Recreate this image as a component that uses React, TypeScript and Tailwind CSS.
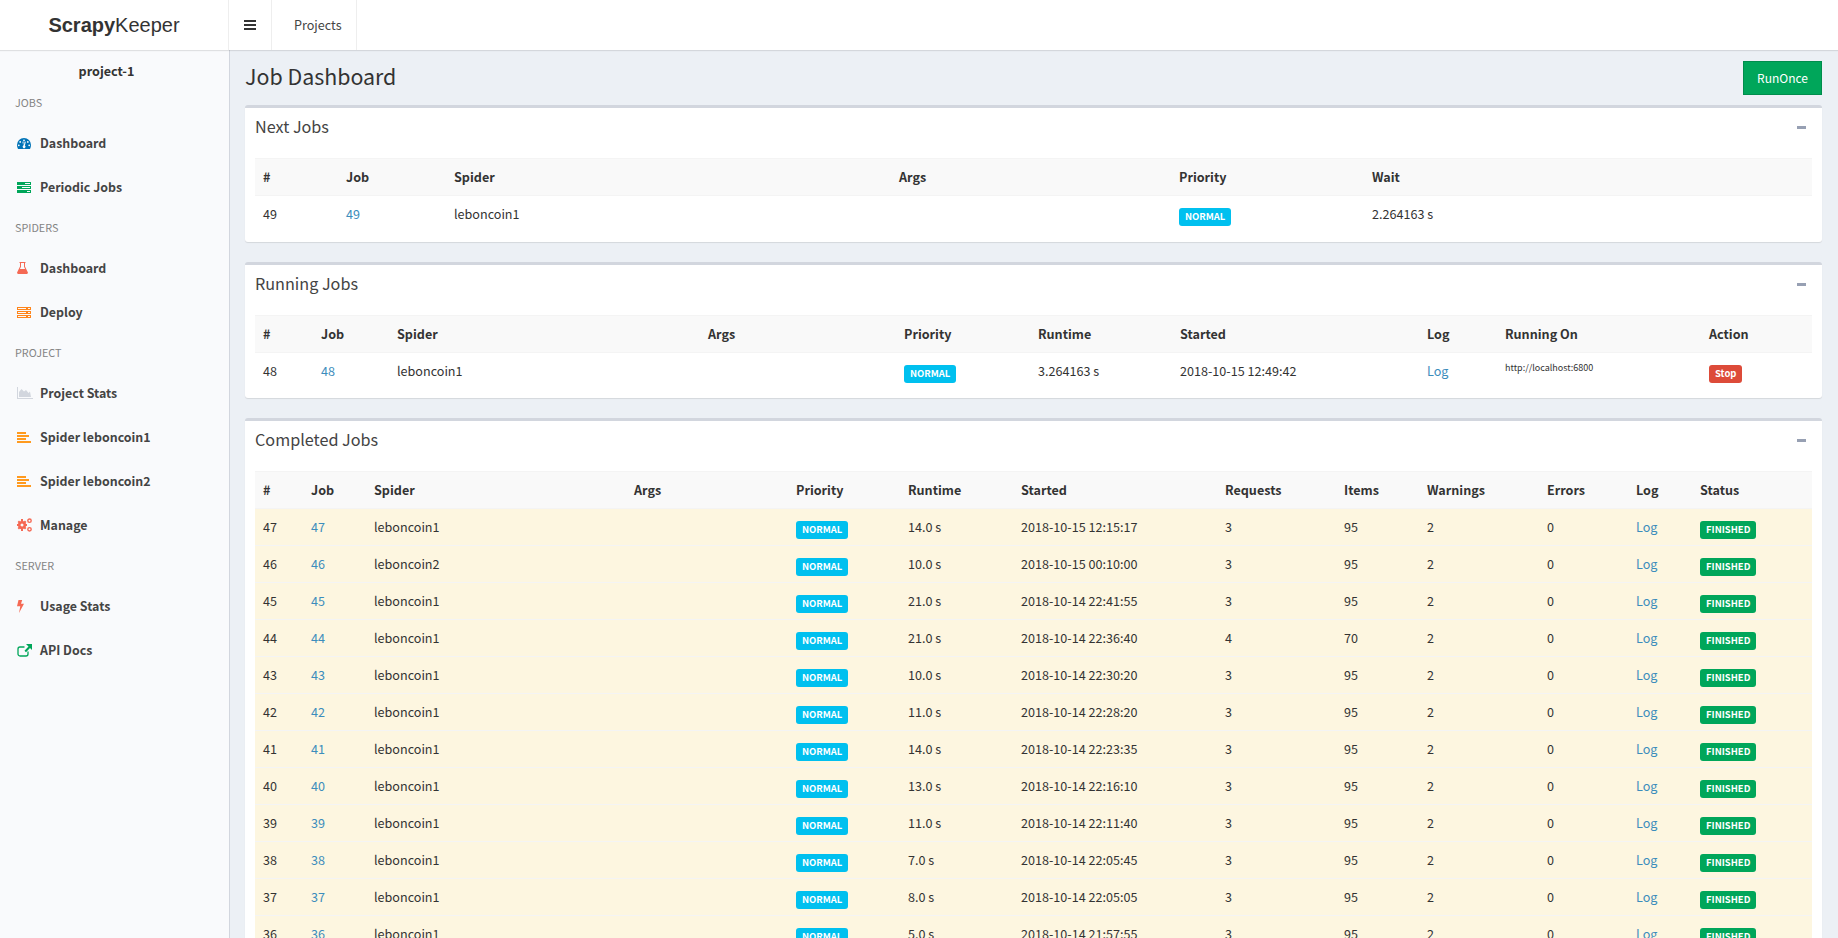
const sans = "font-['Noto_Sans_CJK_SC','Noto_Sans',sans-serif]"

type NavItem = { label: string; icon: React.ReactNode }

function GaugeIcon() {
  return (
    <svg viewBox="0 0 14 11" className="h-[11px] w-[14px]">
      <path fill="#0073b7" fillRule="evenodd" d="M7 0a7 7 0 0 1 7 7c0 1.500-.3 2.800-1 4H1C.3 9.800 0 8.500 0 7a7 7 0 0 1 7-7Zm0 1.400a.9.9 0 1 0 0 1.800.9.9 0 0 0 0-1.800ZM3.200 3a.9.9 0 1 0 0 1.800.9.9 0 0 0 0-1.800Zm7.600 0a.9.9 0 1 0 0 1.800.9.9 0 0 0 0-1.800ZM1.800 6.400a.9.9 0 1 0 0 1.800.9.9 0 0 0 0-1.800Zm10.400 0a.9.9 0 1 0 0 1.800.9.9 0 0 0 0-1.800ZM5.400 3.800l.9 3.800a1.400 1.400 0 1 0 1.600 0l.9-3.800-1.100-.3-.9 3.700h-.5L6.500 3.500Z" />
    </svg>
  )
}

function TasksIcon() {
  return (
    <svg viewBox="0 0 14 11" className="h-[11px] w-[14px]">
      <path fill="#00a65a" fillRule="evenodd" d="M0 0h14v3H0ZM0 4h14v3H0ZM0 8h14v3H0ZM8 1v1h5V1ZM5 5v1h8V5ZM10 9v1h3V9Z" />
    </svg>
  )
}

function FlaskIcon() {
  return (
    <svg viewBox="0 0 11 12" className="h-[12px] w-[11px]">
      <path fill="#f56954" fillRule="evenodd" d="M2.500 0h6v1H8v3.500l2.800 5.700c.4.900-.1 1.800-1 1.800H1.200c-.9 0-1.400-.9-1-1.800L3 4.500V1h-.5ZM4 1v3.700L2.900 7h5.200L7 4.700V1Z" />
    </svg>
  )
}

function ServerIcon() {
  return (
    <svg viewBox="0 0 14 11" className="h-[11px] w-[14px]">
      <path fill="#ff851b" fillRule="evenodd" d="M0 0h14v3H0ZM0 4h14v3H0ZM0 8h14v3H0ZM1 1v1h8V1ZM11 1v1h2V1ZM1 5v1h8V5ZM11 5v1h2V5ZM1 9v1h8V9ZM11 9v1h2V9Z" />
    </svg>
  )
}

function AreaIcon() {
  return (
    <svg viewBox="0 0 16 12" className="h-[12px] w-[16px]">
      <path fill="#d2d6de" d="M0 0h1v11h15v1H0ZM2 10V5l2.500-3 2.500 2.500L9 3l2.500 3L13 4.500l1 5.500Z" />
    </svg>
  )
}

function LinesIcon() {
  return (
    <svg viewBox="0 0 14 11" className="h-[11px] w-[14px]">
      <path fill="#ff9a1f" d="M0 0h9v2H0ZM0 3h12v2H0ZM0 6h9v2H0ZM0 9h14v2H0Z" />
    </svg>
  )
}

function CogsIcon() {
  return (
    <svg viewBox="0 0 15 14" className="h-[14px] w-[15px]">
      <g fill="none" stroke="#f56954">
        <circle cx="5" cy="7" r="2.800" strokeWidth="2.600" />
        <path strokeWidth="2" d="M5 1v2.500M5 10.500V13M0 7h2.500M7.500 7H10M1.300 3.300l1.800 1.800M6.900 8.900l1.800 1.800M1.300 10.700l1.800-1.800M6.900 5.100l1.800-1.800" />
        <circle cx="12.500" cy="2.700" r="1.700" strokeWidth="1.400" />
        <circle cx="12.500" cy="11.300" r="1.700" strokeWidth="1.400" />
      </g>
    </svg>
  )
}

function BoltIcon() {
  return (
    <svg viewBox="0 0 7 13" className="h-[13px] w-[7px]">
      <path fill="#f56954" d="M1.500 0h3.700L4 3.800h3L2 13l1.300-6.700H0Z" />
    </svg>
  )
}

function ExternalIcon() {
  return (
    <svg viewBox="0 0 15 13" className="h-[13px] w-[15px]">
      <path fill="none" stroke="#00a65a" strokeWidth="1.300" d="M11 7.500V10a2 2 0 0 1-2 2H3a2 2 0 0 1-2-2V5a2 2 0 0 1 2-2h4.500" />
      <path fill="#00a65a" d="M9 0h6v6l-2-2-4 4.300-1.500-1.500L11.500 2.500Z" />
    </svg>
  )
}

const jobsNav: NavItem[] = [
  { label: "Dashboard", icon: <GaugeIcon /> },
  { label: "Periodic Jobs", icon: <TasksIcon /> },
]
const spidersNav: NavItem[] = [
  { label: "Dashboard", icon: <FlaskIcon /> },
  { label: "Deploy", icon: <ServerIcon /> },
]
const projectNav: NavItem[] = [
  { label: "Project Stats", icon: <AreaIcon /> },
  { label: "Spider leboncoin1", icon: <LinesIcon /> },
  { label: "Spider leboncoin2", icon: <LinesIcon /> },
  { label: "Manage", icon: <CogsIcon /> },
]
const serverNav: NavItem[] = [
  { label: "Usage Stats", icon: <BoltIcon /> },
  { label: "API Docs", icon: <ExternalIcon /> },
]

const completed = [
  ["47", "leboncoin1", "14.0 s", "2018-10-15 12:15:17", "3", "95"],
  ["46", "leboncoin2", "10.0 s", "2018-10-15 00:10:00", "3", "95"],
  ["45", "leboncoin1", "21.0 s", "2018-10-14 22:41:55", "3", "95"],
  ["44", "leboncoin1", "21.0 s", "2018-10-14 22:36:40", "4", "70"],
  ["43", "leboncoin1", "10.0 s", "2018-10-14 22:30:20", "3", "95"],
  ["42", "leboncoin1", "11.0 s", "2018-10-14 22:28:20", "3", "95"],
  ["41", "leboncoin1", "14.0 s", "2018-10-14 22:23:35", "3", "95"],
  ["40", "leboncoin1", "13.0 s", "2018-10-14 22:16:10", "3", "95"],
  ["39", "leboncoin1", "11.0 s", "2018-10-14 22:11:40", "3", "95"],
  ["38", "leboncoin1", "7.0 s", "2018-10-14 22:05:45", "3", "95"],
  ["37", "leboncoin1", "8.0 s", "2018-10-14 22:05:05", "3", "95"],
  ["36", "leboncoin1", "5.0 s", "2018-10-14 21:57:55", "3", "95"],
]

function NavGroup({ title, items }: { title: string; items: NavItem[] }) {
  return (
    <div>
      <div className="flex h-[37px] items-center pb-[2px] pl-[15px] text-[10.8px] text-[#848484]">{title}</div>
      {items.map((item) => (
        <a key={title + item.label} className="flex h-[44px] items-center text-[12.4px] font-bold text-[#444]">
          <span className="flex w-[40px] pl-[17px]">{item.icon}</span>
          <span>{item.label}</span>
        </a>
      ))}
    </div>
  )
}

function Sidebar() {
  return (
    <aside className="w-[230px] shrink-0 border-r border-[#d2d6de] bg-[#f9fafc]">
      <div className="pt-[11px] pr-[16px] pb-[3px] text-center text-[12.6px] font-bold text-[#333]">project-1</div>
      <NavGroup title="JOBS" items={jobsNav} />
      <NavGroup title="SPIDERS" items={spidersNav} />
      <NavGroup title="PROJECT" items={projectNav} />
      <NavGroup title="SERVER" items={serverNav} />
    </aside>
  )
}

function Label({ color, text }: { color: string; text: string }) {
  return <span className={`inline-block rounded-[3px] px-[6px] pt-[2px] pb-[3px] align-middle text-[9.450px] leading-[13px] font-bold text-white ${color}`}>{text}</span>
}

function Normal() {
  return <Label color="bg-[#00c0ef]" text="NORMAL" />
}

function Box({ title, children, className }: { title: string; children: React.ReactNode; className?: string }) {
  return (
    <section className={`rounded-[3px] border-t-[3px] border-[#d2d6de] bg-white shadow-[0_1px_1px_rgba(0,0,0,0.1)] ${className ?? ""}`}>
      <div className="flex h-[36px] items-center justify-between pr-[16px] pl-[10px] text-[16.2px] text-[#444]">
        <span>{title}</span>
        <span className="mt-[3px] h-[3px] w-[9px] bg-[#97a0b3]" />
      </div>
      <div className="px-[10px] pt-[14px] pb-[9px]">{children}</div>
    </section>
  )
}

const th = "h-[37px] border-t border-[#f4f4f4] px-[8px] text-left font-bold text-[#333]"
const td = "h-[37px] border-t border-[#f4f4f4] px-[8px] text-left text-[#333]"
const tdLink = "h-[37px] border-t border-[#f4f4f4] px-[8px] text-left text-[#3c8dbc]"
const tdLabel = "h-[37px] border-t border-[#f4f4f4] px-[8px] pt-[9px] pb-[6px] text-left"

export default function App() {
  return (
    <div className={`flex h-screen flex-col overflow-hidden bg-[#ecf0f5] text-[12.6px] leading-[20px] text-[#333] ${sans}`}>
      <header className="z-10 flex h-[50px] shrink-0 items-stretch bg-white shadow-[0_1px_1px_rgba(0,0,0,0.1)]">
        <div className="flex w-[229px] items-center justify-center border-r border-[#eee] font-['Liberation_Sans',sans-serif] text-xl text-[#333]">
          <b>Scrapy</b>Keeper
        </div>
        <button className="flex w-[43px] items-center justify-center border-r border-[#eee]">
          <svg viewBox="0 0 12 10" className="h-[10px] w-[12px]">
            <path fill="#333" d="M0 0h12v2H0ZM0 4h12v2H0ZM0 8h12v2H0Z" />
          </svg>
        </button>
        <a className="flex w-[85px] items-center border-r border-[#eee] pl-[22px] text-[#444]">Projects</a>
      </header>
      <div className="flex min-h-0 flex-1">
        <Sidebar />
        <main className="min-w-0 flex-1 pr-[16px] pl-[15px]">
          <div className="flex h-[55px] items-start justify-between pt-[11px]">
            <h1 className="text-[21.4px] leading-[30px] font-normal text-[#333]">Job Dashboard</h1>
            <button className="h-[34px] w-[79px] border border-[#008d4c] bg-[#00a65a] text-[12px] text-white">RunOnce</button>
          </div>
          <Box title="Next Jobs">
            <table className="w-full table-fixed border-collapse">
              <colgroup>
                <col className="w-[83px]" />
                <col className="w-[108px]" />
                <col className="w-[445px]" />
                <col className="w-[280px]" />
                <col className="w-[193px]" />
                <col />
              </colgroup>
              <thead>
                <tr className="bg-[#f9f9f9]">
                  {["#", "Job", "Spider", "Args", "Priority", "Wait"].map((h) => (
                    <th key={h} className={th}>{h}</th>
                  ))}
                </tr>
              </thead>
              <tbody>
                <tr>
                  <td className={td}>49</td>
                  <td className={tdLink}>49</td>
                  <td className={td}>leboncoin1</td>
                  <td className={td} />
                  <td className={tdLabel}><Normal /></td>
                  <td className={td}>2.264163 s</td>
                </tr>
              </tbody>
            </table>
          </Box>
          <Box title="Running Jobs" className="mt-[20px]">
            <table className="w-full table-fixed border-collapse">
              <colgroup>
                <col className="w-[58px]" />
                <col className="w-[76px]" />
                <col className="w-[311px]" />
                <col className="w-[196px]" />
                <col className="w-[134px]" />
                <col className="w-[142px]" />
                <col className="w-[247px]" />
                <col className="w-[78px]" />
                <col className="w-[204px]" />
                <col />
              </colgroup>
              <thead>
                <tr className="bg-[#f9f9f9]">
                  {["#", "Job", "Spider", "Args", "Priority", "Runtime", "Started", "Log", "Running On", "Action"].map((h) => (
                    <th key={h} className={th}>{h}</th>
                  ))}
                </tr>
              </thead>
              <tbody>
                <tr>
                  <td className={td}>48</td>
                  <td className={tdLink}>48</td>
                  <td className={td}>leboncoin1</td>
                  <td className={td} />
                  <td className={tdLabel}><Normal /></td>
                  <td className={td}>3.264163 s</td>
                  <td className={td}>2018-10-15 12:49:42</td>
                  <td className={tdLink}>Log</td>
                  <td className={`${td} pt-[7px] align-top text-[9px] leading-[16px]`}>http://localhost:6800</td>
                  <td className={tdLabel}><Label color="bg-[#dd4b39]" text="Stop" /></td>
                </tr>
              </tbody>
            </table>
          </Box>
          <Box title="Completed Jobs" className="mt-[20px]">
            <table className="w-full table-fixed border-collapse">
              <colgroup>
                <col className="w-[48px]" />
                <col className="w-[63px]" />
                <col className="w-[260px]" />
                <col className="w-[162px]" />
                <col className="w-[112px]" />
                <col className="w-[113px]" />
                <col className="w-[204px]" />
                <col className="w-[119px]" />
                <col className="w-[83px]" />
                <col className="w-[120px]" />
                <col className="w-[89px]" />
                <col className="w-[64px]" />
                <col />
              </colgroup>
              <thead>
                <tr className="bg-[#f9f9f9]">
                  {["#", "Job", "Spider", "Args", "Priority", "Runtime", "Started", "Requests", "Items", "Warnings", "Errors", "Log", "Status"].map((h) => (
                    <th key={h} className={th}>{h}</th>
                  ))}
                </tr>
              </thead>
              <tbody>
                {completed.map((r) => (
                  <tr key={r[0]} className="bg-[#fdf6e0]">
                    <td className={td}>{r[0]}</td>
                    <td className={tdLink}>{r[0]}</td>
                    <td className={td}>{r[1]}</td>
                    <td className={td} />
                    <td className={tdLabel}><Normal /></td>
                    <td className={td}>{r[2]}</td>
                    <td className={td}>{r[3]}</td>
                    <td className={td}>{r[4]}</td>
                    <td className={td}>{r[5]}</td>
                    <td className={td}>2</td>
                    <td className={td}>0</td>
                    <td className={tdLink}>Log</td>
                    <td className={tdLabel}><Label color="bg-[#00a65a]" text="FINISHED" /></td>
                  </tr>
                ))}
              </tbody>
            </table>
          </Box>
        </main>
      </div>
    </div>
  )
}
